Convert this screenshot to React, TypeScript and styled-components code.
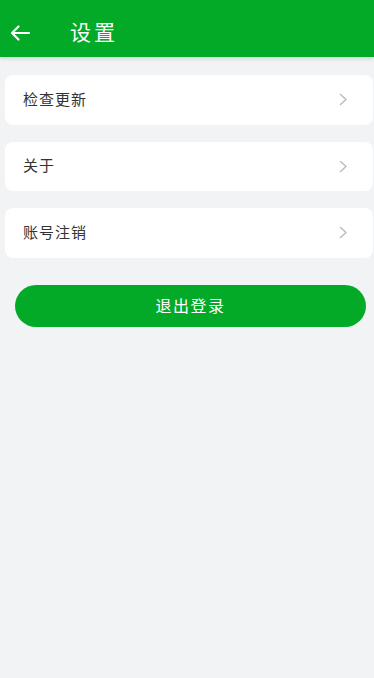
import styled, { createGlobalStyle } from 'styled-components';

const items = ['检查更新', '关于', '账号注销'];

const GlobalStyle = createGlobalStyle`
  html, body {
    margin: 0;
    padding: 0;
    background: #f2f3f5;
    font-family: 'Noto Sans CJK SC', 'Noto Sans', sans-serif;
  }
`;

const Chevron = () => (
  <svg width="9" height="13" viewBox="0 0 9 13" fill="none">
    <path d="M1.5 1.5 L7 6.5 L1.5 11.5" stroke="#bdbdbd" strokeWidth="1.6" strokeLinecap="round" strokeLinejoin="round" />
  </svg>
);

const BackArrow = () => (
  <svg width="20" height="16" viewBox="0 0 20 16" fill="none">
    <path d="M19 8 H2 M8.5 1.5 L2 8 L8.5 14.5" stroke="#fff" strokeWidth="2.2" strokeLinecap="round" strokeLinejoin="round" />
  </svg>
);

const App = () => (
  <Page>
    <GlobalStyle />
    <Header>
      <BackButton>
        <BackArrow />
      </BackButton>
      <Title>设置</Title>
    </Header>
    <List>
      {items.map((label) => (
        <Item key={label}>
          <span>{label}</span>
          <Chevron />
        </Item>
      ))}
    </List>
    <LogoutButton>退出登录</LogoutButton>
  </Page>
);

const Page = styled.div`
  min-height: 678px;
  background: #f2f3f5;
`;

const Header = styled.div`
  height: 49px;
  padding-top: 8px;
  background: #03aa28;
  display: flex;
  align-items: center;
  box-shadow: 0 2px 4px rgba(0, 0, 0, 0.12);
`;

const BackButton = styled.div`
  width: 20px;
  margin-left: 10px;
  display: flex;
  align-items: center;
`;

const Title = styled.div`
  margin-left: 40px;
  color: #fff;
  font-size: 21px;
  line-height: 1;
  letter-spacing: 3px;
  padding-bottom: 3px;
`;

const List = styled.div`
  display: flex;
  flex-direction: column;
  gap: 17px;
  padding: 18px 1px 0 5px;
`;

const Item = styled.div`
  height: 49.5px;
  background: #fff;
  border-radius: 8px;
  display: flex;
  align-items: center;
  justify-content: space-between;
  padding: 0 25px 0 18px;
  color: #333;
  font-size: 15px;
  line-height: 1;
  letter-spacing: 1px;

  span {
    padding-bottom: 3px;
  }
`;

const LogoutButton = styled.div`
  margin: 27px 8px 0 15px;
  height: 42px;
  border-radius: 21px;
  background: #03aa28;
  color: #fff;
  font-size: 16px;
  line-height: 1;
  letter-spacing: 1.5px;
  display: flex;
  align-items: center;
  justify-content: center;
  padding-bottom: 2px;
  box-sizing: border-box;
`;

export default App;
